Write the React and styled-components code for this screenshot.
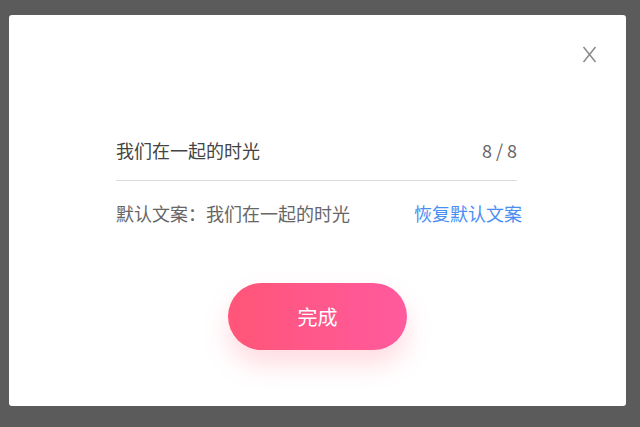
import React, { useState } from "react";
import styled, { createGlobalStyle } from "styled-components";

const DEFAULT_TEXT = "我们在一起的时光";
const MAX_LEN = 8;

const GlobalStyle = createGlobalStyle`
  html, body {
    margin: 0;
    padding: 0;
    background: #5b5b5b;
  }
  body {
    font-family: "Noto Sans CJK SC", "Noto Sans", sans-serif;
  }
`;

export default function App() {
  const [title, setTitle] = useState(DEFAULT_TEXT);

  return (
    <>
      <GlobalStyle />
      <Page>
        <Modal>
          <CloseButton type="button" aria-label="关闭">
            <svg width="15" height="17" viewBox="0 0 15 17">
              <path
                d="M1.5 1 L13.5 16 M13.5 1 L1.5 16"
                stroke="#8a8a8a"
                strokeWidth="1.5"
                fill="none"
              />
            </svg>
          </CloseButton>

          <Body>
            <Field>
              <TitleInput
                value={title}
                maxLength={MAX_LEN}
                onChange={(e) => setTitle(e.target.value)}
              />
              <Counter>
                {title.length} / {MAX_LEN}
              </Counter>
            </Field>

            <DefaultRow>
              <DefaultLabel>默认文案：{DEFAULT_TEXT}</DefaultLabel>
              <ResetLink type="button" onClick={() => setTitle(DEFAULT_TEXT)}>
                恢复默认文案
              </ResetLink>
            </DefaultRow>

            <Submit type="button">完成</Submit>
          </Body>
        </Modal>
      </Page>
    </>
  );
}

const Page = styled.div`
  width: 640px;
  height: 427px;
  box-sizing: border-box;
  padding: 15px 14px 21px 9px;
  display: flex;
`;

const Modal = styled.div`
  position: relative;
  width: 617px;
  height: 391px;
  background: #fff;
  border-radius: 3px;
`;

const CloseButton = styled.button`
  position: absolute;
  top: 31px;
  right: 29px;
  border: 0;
  background: none;
  padding: 0;
  width: 15px;
  height: 17px;
  cursor: pointer;
  display: flex;

  svg {
    display: block;
  }
`;

const Body = styled.div`
  display: flex;
  flex-direction: column;
  padding: 123px 0 0 107px;
`;

const Field = styled.div`
  width: 401px;
  display: flex;
  align-items: center;
  justify-content: space-between;
  padding-bottom: 18px;
  border-bottom: 1px solid #dcdcdc;
`;

const TitleInput = styled.input`
  flex: 1;
  border: 0;
  outline: none;
  padding: 0;
  height: 24px;
  font-family: inherit;
  font-size: 18px;
  line-height: 24px;
  color: #444;
  background: transparent;
`;

const Counter = styled.span`
  font-size: 18px;
  line-height: 24px;
  color: #666;
  white-space: nowrap;
`;

const DefaultRow = styled.div`
  width: 406px;
  margin-top: 20px;
  display: flex;
  align-items: center;
  justify-content: space-between;
  font-size: 18px;
  line-height: 24px;
`;

const DefaultLabel = styled.span`
  color: #666;
`;

const ResetLink = styled.button`
  border: 0;
  background: none;
  padding: 0;
  font-family: inherit;
  font-size: 18px;
  line-height: 24px;
  color: #4a8ef2;
  cursor: pointer;
`;

const Submit = styled.button`
  align-self: flex-start;
  margin: 58px 0 0 112px;
  width: 179px;
  height: 67px;
  border: 0;
  border-radius: 34px;
  background: linear-gradient(90deg, #ff5578 0%, #ff5a9e 100%);
  box-shadow: 0 14px 26px rgba(255, 90, 120, 0.22);
  color: #fff;
  font-family: inherit;
  font-size: 20px;
  cursor: pointer;
`;
